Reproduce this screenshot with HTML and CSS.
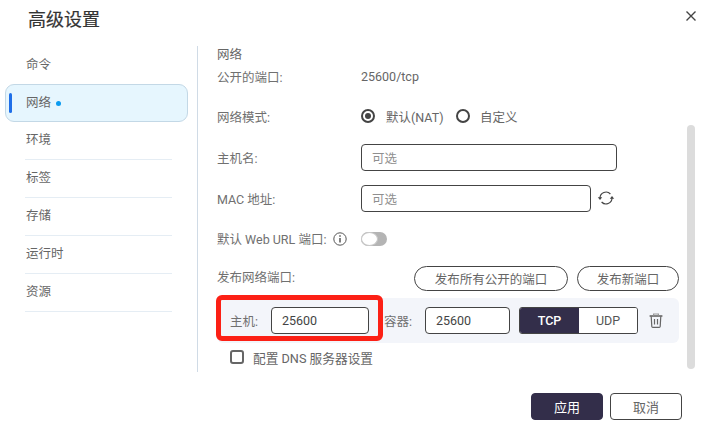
FILE: index.html
```html
<!DOCTYPE html>
<html lang="zh">
<head>
<meta charset="utf-8">
<title>高级设置</title>
<link rel="stylesheet" href="styles.css">
</head>
<body>
<div class="dialog">
  <header class="head">
    <h1 class="title">高级设置</h1>
    <svg class="close" width="12" height="12" viewBox="0 0 12 12"><path d="M1.5 1.5l9 9M10.5 1.5l-9 9" stroke="#444" stroke-width="1.4" fill="none"/></svg>
  </header>
  <div class="body">
    <nav class="side">
      <div class="item">命令</div>
      <div class="item active"><span class="bar"></span>网络<span class="dot"></span></div>
      <div class="item line">环境</div>
      <div class="item line">标签</div>
      <div class="item line">存储</div>
      <div class="item line">运行时</div>
      <div class="item line">资源</div>
    </nav>
    <main class="content">
      <div class="section">网络</div>
      <div class="row r-ports"><span class="label">公开的端口:</span><span class="value">25600/tcp</span></div>
      <div class="row r-mode"><span class="label">网络模式:</span>
        <span class="radio on"></span><span class="rtext first">默认(NAT)</span>
        <span class="radio"></span><span class="rtext second">自定义</span>
      </div>
      <div class="row r-host"><span class="label">主机名:</span><div class="input wide">可选</div></div>
      <div class="row r-mac"><span class="label">MAC 地址:</span><div class="input mac">可选</div>
        <svg class="refresh" width="18" height="18" viewBox="0 0 18 18" fill="none" stroke="#444" stroke-width="1.2"><path d="M3 9a6 6 0 0 1 10.4-4"/><path d="M15 9a6 6 0 0 1-10.4 4"/><path d="M0.8 8.2h4.4L3 11z" fill="#444" stroke="none"/><path d="M12.8 9.8h4.4L15 7z" fill="#444" stroke="none"/></svg>
      </div>
      <div class="row r-web"><span class="label auto">默认 Web URL 端口:</span>
        <svg class="info" width="14" height="14" viewBox="0 0 14 14" fill="none" stroke="#555"><circle cx="7" cy="7" r="6.2"/><path d="M7 6v4.6" stroke-width="1.5"/><path d="M7 3.2v1.5" stroke-width="1.5"/></svg>
        <span class="toggle"><span class="knob"></span></span>
      </div>
      <div class="row r-pub"><span class="label">发布网络端口:</span>
        <div class="pills"><button class="pill p1">发布所有公开的端口</button><button class="pill p2">发布新端口</button></div>
      </div>
      <div class="port">
        <span class="plabel">主机:</span><div class="input pnum host">25600</div>
        <span class="plabel cont">容器:</span><div class="input pnum cnum">25600</div>
        <div class="seg"><span class="seg-on">TCP</span><span class="seg-off">UDP</span></div>
        <svg class="trash" width="14" height="15" viewBox="0 0 14 15" fill="none" stroke="#666" stroke-width="1.2"><path d="M0.6 3h12.8" stroke-width="1.6"/><path d="M4.6 2.4V1h4.8v1.4" stroke="#999"/><path d="M2.2 3.2l.6 10.2a1 1 0 0 0 1 .9h6.4a1 1 0 0 0 1-.9l.6-10.2"/><path d="M5.5 6v5.5M8.5 6v5.5"/></svg>
        <div class="redbox"></div>
      </div>
      <label class="dns"><span class="check"></span>配置 DNS 服务器设置</label>
      <div class="scroll"></div>
    </main>
  </div>
  <footer class="foot">
    <button class="btn primary">应用</button><button class="btn">取消</button>
  </footer>
</div>
</body>
</html>
```
FILE: styles.css
```css
* { box-sizing: border-box; }
html, body { margin: 0; padding: 0; background: #fff; }
body { width: 708px; height: 441px; overflow: hidden; font-family: Roboto, "Noto Sans CJK SC", sans-serif; font-size: 12.5px; color: #666; }
.dialog { width: 708px; height: 441px; display: flex; flex-direction: column; }
.head { height: 46px; padding: 9px 11px 0 28px; display: flex; justify-content: space-between; align-items: flex-start; }
.title { margin: 0; font-size: 18px; line-height: 22px; font-weight: 400; color: #333; -webkit-text-stroke: 0.2px #333; }
.close { margin-top: 1px; }
.body { height: 326px; display: flex; }
.side { width: 198px; padding: 0 9px 0 5px; border-right: 1px solid #d0dbe6; margin-right: 19px; }
.item { height: 38px; padding: 0 0 3px 21px; display: flex; align-items: center; color: #666; position: relative; }
.item.active { background: #e6f6fe; border: 1px solid #c3d8e6; border-radius: 9px; padding-left: 20px; }
.item.line { margin: 0 16px 0 20px; padding-left: 1px; padding-bottom: 4px; border-bottom: 1px solid #e5edf4; }
.bar { position: absolute; left: 3px; top: 8px; width: 3px; height: 20px; border-radius: 2px; background: #1f6fe8; }
.dot { width: 5px; height: 5px; margin: 3px 0 0 5px; border-radius: 50%; background: #0a9bf0; }
.content { width: 470px; position: relative; }
.section { height: 17px; line-height: 16px; padding-top: 1px; }
.row { display: flex; align-items: center; }
.label { width: 144px; flex: none; color: #707070; }
.label.auto { width: 116px; white-space: nowrap; }
.r-ports { height: 29px; padding-bottom: 2px; }
.r-mode { height: 50px; padding-bottom: 2px; }
.r-host { height: 31px; }
.r-mac { height: 50px; }
.r-web { height: 31px; }
.r-pub { height: 44px; }
.radio { width: 14px; height: 14px; border-radius: 50%; border: 2px solid #444; flex: none; display: flex; align-items: center; justify-content: center; }
.radio.on::after { content: ""; width: 6px; height: 6px; border-radius: 50%; background: #444; }
.rtext.first { margin-left: 11px; width: 70px; white-space: nowrap; }
.rtext.second { margin-left: 10px; }
.input { height: 27px; border: 1px solid #444; border-radius: 4px; padding-left: 10px; display: flex; align-items: center; color: #8f8f8f; background: #fff; }
.wide { width: 256px; }
.mac { width: 230px; }
.refresh { margin-left: 6px; }
.info { margin-left: 0; }
.toggle { width: 26px; height: 14px; margin-left: 14px; border-radius: 7px; background: #b4b4b4; position: relative; }
.knob { position: absolute; left: 0; top: 0; width: 17px; height: 14px; border-radius: 50%; background: #fff; border: 1px solid #c8c8c8; }
.pills { display: flex; gap: 9px; margin: 5px 0 0 53px; }
.pill { height: 25px; border: 1px solid #444; border-radius: 13px; background: #fff; font: inherit; color: #666; padding: 0; }
.p1 { width: 154px; }
.p2 { width: 102px; }
.port { width: 462px; height: 45px; background: #f3f5fa; border-radius: 6px; padding-left: 13px; display: flex; align-items: center; position: relative; }
.plabel { color: #707070; width: 41px; flex: none; white-space: nowrap; }
.plabel.cont { margin-left: 15px; }
.port .input { color: #444; }
.host { width: 98px; }
.cnum { width: 85px; }
.seg { width: 119px; height: 27px; margin-left: 9px; display: flex; border: 1px solid #444; border-radius: 3px; overflow: hidden; }
.seg-on { flex: 60; background: #332e4a; color: #fff; font-weight: 500; display: flex; align-items: center; justify-content: center; }
.seg-off { flex: 59; background: #fff; color: #555; display: flex; align-items: center; justify-content: center; }
.trash { margin-left: 11px; }
.redbox { position: absolute; left: -1px; top: -3px; width: 167px; height: 46px; border: 5px solid #fc2015; border-radius: 6px; pointer-events: none; }
.dns { height: 30px; margin-left: 13px; padding-bottom: 2px; display: flex; align-items: center; font-size: 12.7px; color: #666; }
.check { width: 14px; height: 14px; border: 2px solid #666; border-radius: 3px; margin-right: 9px; }
.scroll { position: absolute; left: 470px; top: 79px; width: 8px; height: 244px; border-radius: 4px; background: #dcdcdc; }
.foot { padding: 21px 26px 0 0; display: flex; justify-content: flex-end; gap: 7px; }
.btn { width: 72px; height: 27px; padding: 0; border: 1px solid #444; border-radius: 4px; background: #fff; font: inherit; font-size: 13px; color: #666; }
.btn.primary { background: #332e4a; border-color: #332e4a; color: #fff; }
```
